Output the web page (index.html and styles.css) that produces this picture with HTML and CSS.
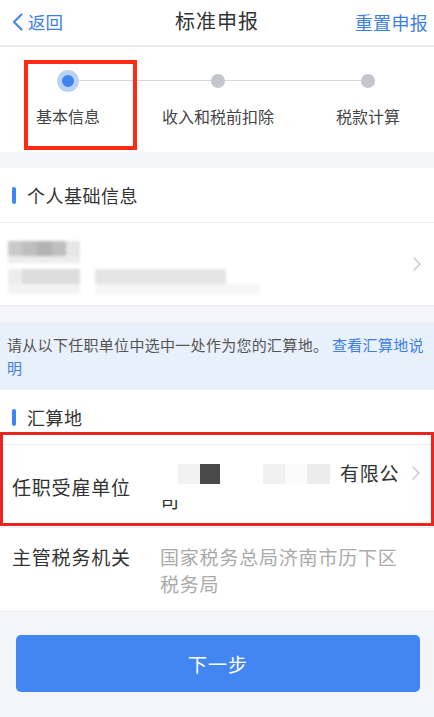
FILE: index.html
```html
<!DOCTYPE html>
<html lang="zh">
<head>
<meta charset="utf-8">
<link rel="stylesheet" href="styles.css">
</head>
<body>
<header class="nav">
  <a class="back"><svg class="back-icon" width="11" height="18" viewBox="0 0 11 18"><path d="M9.5 1.5 L2 9 L9.5 16.5" fill="none" stroke="#4a88e0" stroke-width="2.2" stroke-linecap="round" stroke-linejoin="round"/></svg><span>返回</span></a>
  <h1 class="title">标准申报</h1>
  <a class="reset">重置申报</a>
</header>

<section class="steps">
  <div class="step-line"></div>
  <div class="step active"><span class="dot"></span><span class="step-label">基本信息</span></div>
  <div class="step"><span class="dot"></span><span class="step-label">收入和税前扣除</span></div>
  <div class="step"><span class="dot"></span><span class="step-label">税款计算</span></div>
  <div class="annot annot-step"></div>
</section>

<section class="card first-card">
  <div class="sec-title"><span class="bar"></span>个人基础信息</div>
  <div class="blur-row">
    <div class="blur">
      <div class="bl-line">
        <i class="b w14 g1"></i><i class="b w15 g2"></i><i class="b w15 g3"></i><i class="b w14 g2"></i><i class="b w14 g4"></i>
      </div>
      <div class="bl-line thin">
        <i class="b w72 g5"></i>
      </div>
      <div class="bl-line gapt">
        <i class="b w14 g5"></i><i class="b w58 g4b"></i><i class="b sp15"></i><i class="b w131 g4c"></i>
      </div>
      <div class="bl-line thin2">
        <i class="b w72 g6"></i><i class="b sp15"></i><i class="b w165 g7"></i>
      </div>
    </div>
    <svg class="chev" width="8" height="14" viewBox="0 0 8 14"><path d="M1 1 L7 7 L1 13" fill="none" stroke="#c9c9cc" stroke-width="1.5" stroke-linecap="round" stroke-linejoin="round"/></svg>
  </div>
</section>

<div class="notice"><span>请从以下任职单位中选中一处作为您的汇算地。</span> <span class="link">查看汇算地说</span><span class="link">明</span></div>

<section class="card">
  <div class="sec-title"><span class="bar"></span>汇算地</div>
  <div class="field center">
    <div class="f-label">任职受雇单位</div>
    <div class="f-value dark">
      <span class="masked"><i class="m m1"></i><i class="m m2"></i><i class="m m3"></i><i class="m m4"></i><i class="m m5"></i><i class="m m6"></i><i class="m m7"></i></span>有限公<br><span class="cut">司</span>
    </div>
    <svg class="chev" width="8" height="14" viewBox="0 0 8 14"><path d="M1 1 L7 7 L1 13" fill="none" stroke="#c9c9cc" stroke-width="1.5" stroke-linecap="round" stroke-linejoin="round"/></svg>
    <div class="annot annot-field"></div>
  </div>
  <div class="field">
    <div class="f-label">主管税务机关</div>
    <div class="f-value">国家税务总局济南市历下区税务局</div>
  </div>
</section>

<div class="footer">
  <button class="next">下一步</button>
</div>
</body>
</html>
```

FILE: styles.css
```css
* { box-sizing: border-box; margin: 0; padding: 0; }
html, body { background: #f4f5f8; }
body {
  font-family: "Noto Sans CJK SC", "Noto Sans", sans-serif;
  color: #333;
  width: 434px;
  overflow: hidden;
}
.nav {
  height: 47px;
  background: #fff;
  border-bottom: 2px solid #ececef;
  display: flex;
  align-items: center;
  justify-content: space-between;
  position: relative;
  padding: 0 6px 2px 12px;
}
.back {
  display: flex;
  align-items: center;
  color: #3d80e2;
  font-size: 17.5px;
  gap: 5px;
}
.back-icon { display: block; }
.title {
  position: absolute;
  left: 0; right: 0; top: 6px;
  text-align: center;
  font-size: 20px;
  font-weight: 400;
  letter-spacing: 1px;
  color: #333;
  pointer-events: none;
}
.reset {
  color: #3d80e2;
  font-size: 18px;
  letter-spacing: 0.3px;
}

.steps {
  height: 105px;
  background: #fff;
  display: grid;
  grid-template-columns: repeat(3, 150px);
  position: relative;
  transform: translateX(-7px);
  width: 450px;
}
.step-line {
  position: absolute;
  left: 75px; width: 300px;
  top: 33px; height: 1px;
  background: #d6d7dc;
}
.step {
  display: flex;
  flex-direction: column;
  align-items: center;
  position: relative;
}
.dot {
  margin-top: 27px;
  width: 14px; height: 14px;
  border-radius: 50%;
  background: #c4c6cd;
}
.step.active .dot {
  margin-top: 23px;
  width: 22px; height: 22px;
  background: #3e83f0;
  border: 5px solid #b9d3f8;
  margin-bottom: -4px;
}
.step-label {
  margin-top: 16px;
  font-size: 16px;
  color: #444;
  line-height: 24px;
}
.annot {
  position: absolute;
  pointer-events: none;
}
.annot-step {
  left: 31px; top: 13px;
  width: 113px; height: 90px;
  border: 4px solid #ff2a14;
}

.card {
  background: #fff;
}
.first-card {
  margin-top: 16px;
  border-bottom: 2px solid #efeff2;
}
.sec-title {
  height: 55px;
  display: flex;
  align-items: center;
  gap: 11px;
  padding-left: 12px;
  font-size: 18px;
  letter-spacing: 0.5px;
  color: #333;
  border-bottom: 1px solid #eeeef0;
}
.bar {
  width: 4px; height: 17px;
  border-radius: 2px;
  background: #3f86f0;
}
.blur-row {
  height: 82px;
  display: flex;
  align-items: center;
  justify-content: space-between;
  padding: 0 13px 0 8px;
}
.blur {
  filter: blur(1.5px);
  display: flex;
  flex-direction: column;
  padding-top: 6px;
}
.bl-line { display: flex; height: 15px; }
.bl-line.thin { height: 7px; }
.bl-line.gapt { margin-top: 6px; height: 15px; }
.bl-line.thin2 { height: 10px; }
.b { display: block; height: 100%; }
.w14 { width: 14px; } .w15 { width: 15px; } .w58 { width: 58px; }
.w72 { width: 72px; } .w131 { width: 131px; } .w165 { width: 165px; }
.sp15 { width: 15px; }
.g1 { background: #c9c9c9; } .g2 { background: #bebebe; } .g3 { background: #b3b3b3; }
.g4 { background: #e6e6e6; } .g4b { background: #dcdcdc; } .g4c { background: #e4e4e4; }
.g5 { background: #ececec; } .g6 { background: #f2f2f2; } .g7 { background: #f6f6f6; }
.chev { display: block; flex: none; }

.notice {
  margin-top: 16px;
  background: #e8f0fb;
  padding: 10px 6px 11px 7px;
  font-size: 15px;
  line-height: 23px;
  letter-spacing: 0.3px;
  color: #555;
}
.link { color: #3d80e2; }

.field {
  position: relative;
  display: flex;
  align-items: flex-start;
  padding: 15px 13px 13px 12px;
  border-bottom: 1px solid #eeeef0;
  font-size: 19px;
  letter-spacing: 0.8px;
}
.field.center { align-items: center; padding: 13px 13px 13px 12px; height: 83px; }
.field:last-child { border-bottom: none; height: 82px; }
.f-label {
  width: 148px;
  flex: none;
  line-height: 27px;
  color: #333;
}
.f-value {
  width: 242px;
  flex: none;
  line-height: 27px;
  color: #aaa;
}
.f-value.dark { color: #333; }
.field .chev { margin-left: 10px; }
.field.center .chev { align-self: flex-start; margin-top: 8px; }
.masked {
  display: inline-flex;
  width: 180px;
  height: 20px;
  vertical-align: -3px;
  align-items: stretch;
}
.m { display: block; height: 100%; }
.m1 { width: 18px; background: #fff; }
.m2 { width: 22px; background: #f2f2f2; }
.m3 { width: 20px; background: #4a4a4a; }
.m4 { width: 43px; background: #fff; }
.m5 { width: 22px; background: #f1f1f1; }
.m6 { width: 22px; background: #fbfbfb; }
.m7 { width: 23px; background: #ececec; }
.cut {
  position: relative;
  display: inline-block;
}
.cut::before {
  content: "";
  position: absolute;
  left: 0; right: 0; top: 0; height: 14px;
  background: #fff;
}
.annot-field {
  left: 0; right: 0; top: -13px; height: 94px;
  border: 3px solid #e8261f;
}

.footer {
  padding: 25px 14px 30px 16px;
}
.next {
  display: block;
  width: 404px;
  height: 57px;
  border: none;
  border-radius: 5px;
  background: #4287f1;
  color: #fff;
  font-family: "Noto Sans CJK SC", sans-serif;
  font-size: 19px;
  letter-spacing: 1px;
}
```
